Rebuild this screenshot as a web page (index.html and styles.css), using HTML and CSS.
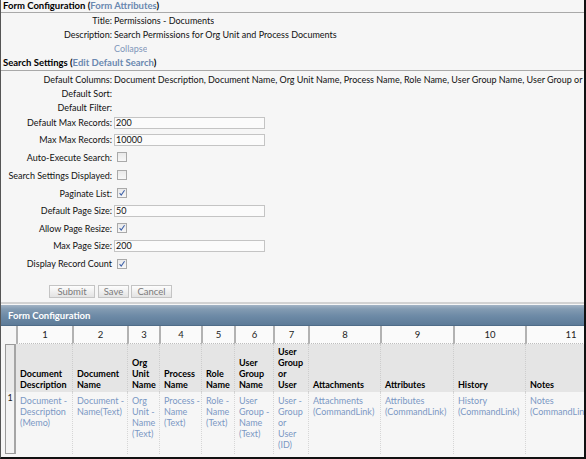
FILE: index.html
```html
<!DOCTYPE html>
<html>
<head>
<meta charset="utf-8">
<link rel="stylesheet" href="styles.css">
</head>
<body>
<div class="frame">
  <div class="sect-head">Form Configuration (<span class="hlink">Form Attributes</span>)</div>
  <div class="row"><div class="lbl">Title:</div><div class="val">Permissions - Documents</div></div>
  <div class="row"><div class="lbl">Description:</div><div class="val">Search Permissions for Org Unit and Process Documents</div></div>
  <div class="row tall"><div class="lbl"></div><div class="val collapse">Collapse</div></div>
  <div class="sect-head sect2">Search Settings (<span class="hlink">Edit Default Search</span>)</div>
  <div class="row first"><div class="lbl">Default Columns:</div><div class="val">Document Description, Document Name, Org Unit Name, Process Name, Role Name, User Group Name, User Group or User, Attachments, Attributes, History, Notes</div></div>
  <div class="row"><div class="lbl">Default Sort:</div><div class="val"></div></div>
  <div class="row"><div class="lbl">Default Filter:</div><div class="val"></div></div>
  <div class="row in"><div class="lbl">Default Max Records:</div><div class="val"><div class="inp">200</div></div></div>
  <div class="row in"><div class="lbl">Max Max Records:</div><div class="val"><div class="inp">10000</div></div></div>
  <div class="row cbr"><div class="lbl">Auto-Execute Search:</div><div class="val"><span class="cb"></span></div></div>
  <div class="row cbr"><div class="lbl">Search Settings Displayed:</div><div class="val"><span class="cb"></span></div></div>
  <div class="row cbr"><div class="lbl">Paginate List:</div><div class="val"><span class="cb on"><svg viewBox="0 0 10 10" width="8" height="8"><path d="M2 5.2 L4 7.6 L8.2 1.6" fill="none" stroke="#3b5fa8" stroke-width="1.3"/></svg></span></div></div>
  <div class="row in"><div class="lbl">Default Page Size:</div><div class="val"><div class="inp">50</div></div></div>
  <div class="row cbr"><div class="lbl">Allow Page Resize:</div><div class="val"><span class="cb on"><svg viewBox="0 0 10 10" width="8" height="8"><path d="M2 5.2 L4 7.6 L8.2 1.6" fill="none" stroke="#3b5fa8" stroke-width="1.3"/></svg></span></div></div>
  <div class="row in"><div class="lbl">Max Page Size:</div><div class="val"><div class="inp">200</div></div></div>
  <div class="row cbr last"><div class="lbl">Display Record Count</div><div class="val"><span class="cb on"><svg viewBox="0 0 10 10" width="8" height="8"><path d="M2 5.2 L4 7.6 L8.2 1.6" fill="none" stroke="#3b5fa8" stroke-width="1.3"/></svg></span></div></div>
  <div class="btns">
    <div class="btn b-submit">Submit</div>
    <div class="btn b-save">Save</div>
    <div class="btn b-cancel">Cancel</div>
  </div>
  <div class="fc">
    <div class="bar">Form Configuration</div>
    <div class="grid">
      <div class="nc nc0"></div>
      <div class="nc">1</div>
      <div class="nc">2</div>
      <div class="nc">3</div>
      <div class="nc">4</div>
      <div class="nc">5</div>
      <div class="nc">6</div>
      <div class="nc">7</div>
      <div class="nc">8</div>
      <div class="nc">9</div>
      <div class="nc">10</div>
      <div class="nc">11</div>

      <div class="rh rh-top"></div>
      <div class="hc c1">Document<br>Description</div>
      <div class="hc">Document<br>Name</div>
      <div class="hc">Org<br>Unit<br>Name</div>
      <div class="hc">Process<br>Name</div>
      <div class="hc">Role<br>Name</div>
      <div class="hc">User<br>Group<br>Name</div>
      <div class="hc">User<br>Group<br>or<br>User</div>
      <div class="hc">Attachments</div>
      <div class="hc">Attributes</div>
      <div class="hc">History</div>
      <div class="hc">Notes</div>

      <div class="rh rh-bot">1</div>
      <div class="dc c1">Document -<br>Description<br>(Memo)</div>
      <div class="dc">Document -<br>Name(Text)</div>
      <div class="dc">Org<br>Unit -<br>Name<br>(Text)</div>
      <div class="dc">Process -<br>Name<br>(Text)</div>
      <div class="dc">Role -<br>Name<br>(Text)</div>
      <div class="dc">User<br>Group -<br>Name<br>(Text)</div>
      <div class="dc">User -<br>Group<br>or<br>User<br>(ID)</div>
      <div class="dc">Attachments<br>(CommandLink)</div>
      <div class="dc">Attributes<br>(CommandLink)</div>
      <div class="dc">History<br>(CommandLink)</div>
      <div class="dc">Notes<br>(CommandLink)</div>
    </div>
  </div>
</div>
</body>
</html>
```
FILE: styles.css
```css
* { box-sizing: border-box; margin: 0; padding: 0; }
html, body { width: 586px; height: 459px; overflow: hidden; background: #f6f6f6; }
body { font-family: Lato, "Liberation Sans", sans-serif; font-size: 9px; color: #111; }

.frame {
  width: 586px; height: 459px; overflow: hidden;
  border-left: 1px solid #555; border-right: 2px solid #111; border-bottom: 2px solid #111;
}

.sect-head {
  font-weight: bold; font-size: 9.5px; padding-left: 2px; height: 13px; line-height: 12px;
  border-bottom: 1px solid #a9a9a9; white-space: nowrap; color: #000;
}
.sect2 { height: 15px; line-height: 14px; }
.hlink { color: #6a88b0; }

.row { display: flex; align-items: center; height: 14px; white-space: nowrap; }
.row.tall { height: 15px; }
.row.first { margin-top: 1px; }
.row.in { height: 17px; }
.row.cbr { height: 18px; }
.row.last { height: 19px; }
.lbl { width: 111px; flex: none; text-align: right; }
.val { margin-left: 2px; overflow: hidden; }
.collapse { color: #7f97ba; }

.inp {
  width: 151px; height: 12px; line-height: 10px; padding-left: 1px;
  border: 1px solid #c4c4c4; background: #fbfbfb; color: #111;
}
.cb {
  display: flex; align-items: center; justify-content: center;
  width: 10px; height: 10px; margin-left: 3px;
  border: 1px solid #a9a9a9; background: linear-gradient(#e9e9e9, #f7f7f7);
}

.btns { display: flex; gap: 2px; padding-left: 48px; margin-top: 12px; }
.btn {
  height: 13px; line-height: 11px; text-align: center; color: #7a7a7a; font-size: 9.5px;
  border: 1px solid #c4c4c4; background: linear-gradient(#fdfdfd, #e3e3e3);
}
.b-submit { width: 46px; }
.b-save { width: 31px; margin-left: 1px; }
.b-cancel { width: 41px; }

.fc { margin-top: 4px; border-top: 2px solid #d2d2d2; padding-top: 1px; }
.bar {
  height: 21px; line-height: 21px; padding-left: 7px; color: #fff; font-weight: bold; font-size: 9.5px;
  background: linear-gradient(#a3b4c5 0, #839bb2 20%, #6d8aa6 55%, #5d7b98 100%);
  border-bottom: 1px solid #4f6c88;
}

.grid {
  display: grid; margin-left: 4px;
  grid-template-columns: 11px 56px 55px 32px 42px 33px 39px 35px 72px 73px 72px 90px;
  grid-template-rows: 18px 48px 62px;
  font-size: 9px; line-height: 11px;
}
.nc {
  background: #fafafa; border-left: 2px solid #b2b2b2; border-bottom: 1px dotted #bdbdbd;
  text-align: center; line-height: 17px; font-size: 9.5px; color: #222;
}
.nc0 { background: none; border: none; }

.hc {
  display: flex; flex-direction: column; justify-content: flex-end;
  background: #e5e5e5; border-left: 1px dotted #cdcdcd;
  font-weight: bold; padding: 0 2px 2px 4px; white-space: nowrap; color: #000;
}
.dc {
  border-left: 1px dotted #d6d6d6; padding: 3px 2px 0 4px;
  color: #7b98c4; white-space: nowrap;
}
.c1 { border-left: none; }

.rh { border-left: 1px solid #9a9a9a; border-right: 2px solid #a5a5a5; background: #f4f4f4; }
.rh-top { border-top: 1px solid #9a9a9a; background: #eaeaea; }
.rh-bot { border-bottom: 1px solid #9a9a9a; text-align: center; line-height: 11px; color: #222; }
```
